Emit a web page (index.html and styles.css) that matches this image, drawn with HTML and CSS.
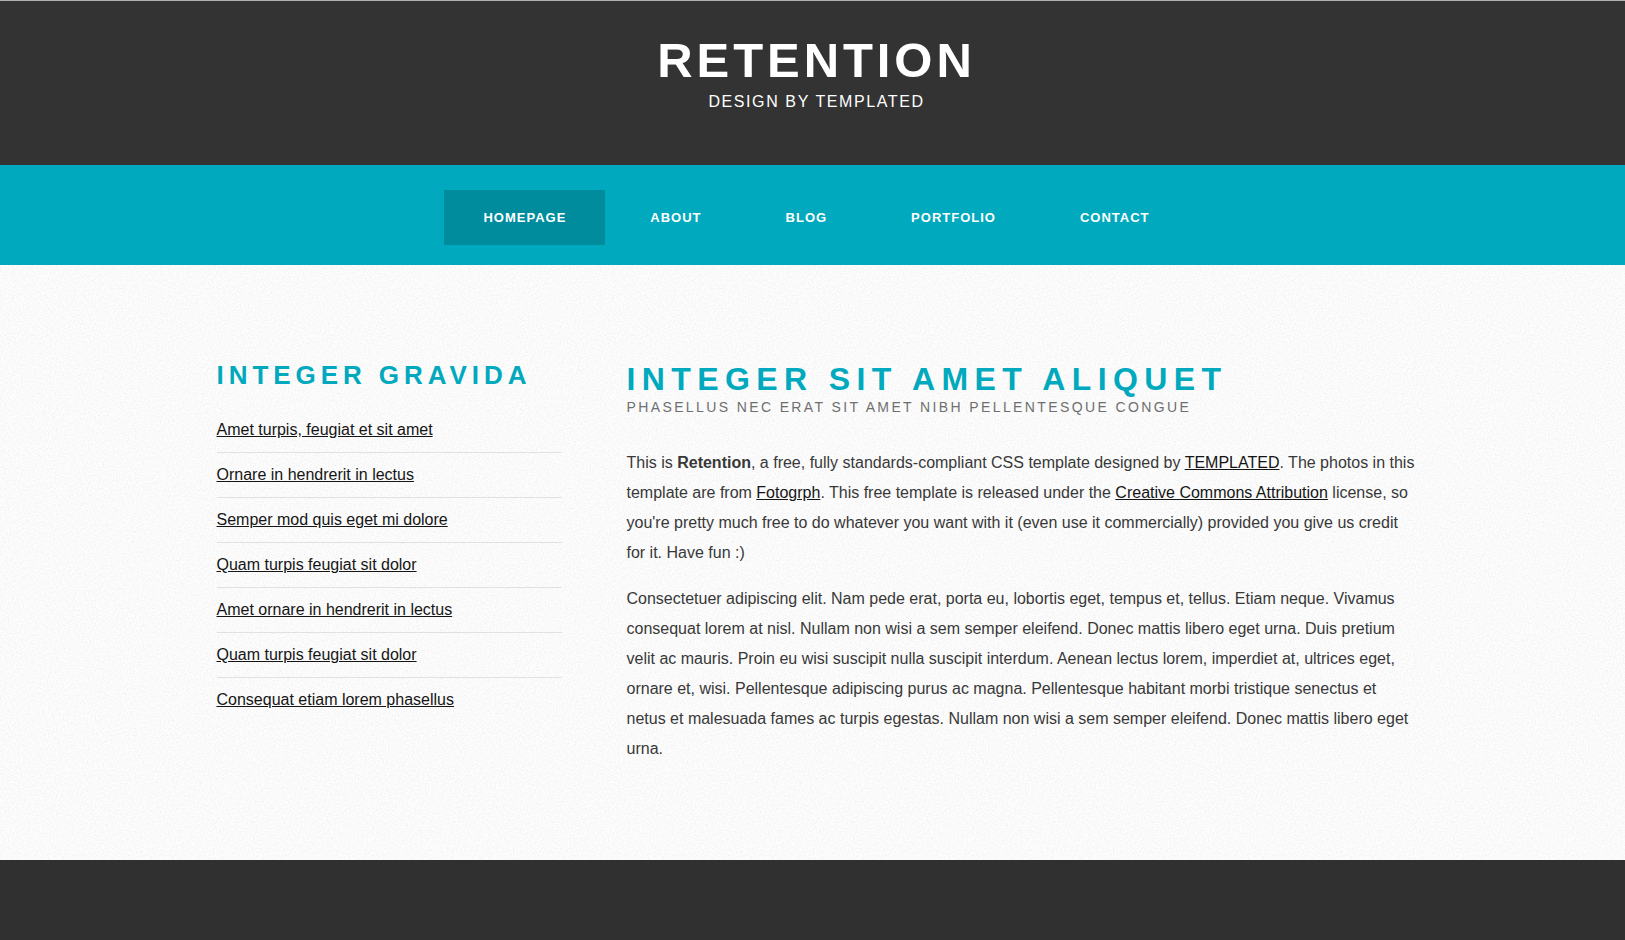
FILE: index.html
```html
<!DOCTYPE html>
<html lang="en">
<head>
<meta charset="utf-8">
<meta name="viewport" content="width=device-width, initial-scale=1">
<title>Retention by TEMPLATED</title>
<link rel="stylesheet" href="styles.css">
</head>
<body>
<header class="header">
  <h1 class="logo"><a href="#">Retention</a></h1>
  <p class="tagline">Design by <a href="#">TEMPLATED</a></p>
</header>
<nav class="menu" aria-label="Main">
  <ul class="menu-list">
    <li><a class="menu-link menu-link-active" href="#" aria-current="page">Homepage</a></li>
    <li><a class="menu-link" href="#">About</a></li>
    <li><a class="menu-link" href="#">Blog</a></li>
    <li><a class="menu-link" href="#">Portfolio</a></li>
    <li><a class="menu-link" href="#">Contact</a></li>
  </ul>
</nav>
<div class="page">
  <div class="container">
    <aside class="sidebar">
      <h2 class="sidebar-title">Integer gravida</h2>
      <ul class="link-list">
        <li><a href="#">Amet turpis, feugiat et sit amet</a></li>
        <li><a href="#">Ornare in hendrerit in lectus</a></li>
        <li><a href="#">Semper mod quis eget mi dolore</a></li>
        <li><a href="#">Quam turpis feugiat sit dolor</a></li>
        <li><a href="#">Amet ornare in hendrerit in lectus</a></li>
        <li><a href="#">Quam turpis feugiat sit dolor</a></li>
        <li><a href="#">Consequat etiam lorem phasellus</a></li>
      </ul>
    </aside>
    <main class="content">
      <h2 class="content-title">Integer sit amet aliquet</h2>
      <p class="byline">Phasellus nec erat sit amet nibh pellentesque congue</p>
      <p class="text">This is <strong>Retention</strong>, a free, fully standards-compliant CSS template designed by <a href="#">TEMPLATED</a>. The photos in this template are from <a href="#">Fotogrph</a>. This free template is released under the <a href="#">Creative Commons Attribution</a> license, so you're pretty much free to do whatever you want with it (even use it commercially) provided you give us credit for it. Have fun :)</p>
      <p class="text">Consectetuer adipiscing elit. Nam pede erat, porta eu, lobortis eget, tempus et, tellus. Etiam neque. Vivamus consequat lorem at nisl. Nullam non wisi a sem semper eleifend. Donec mattis libero eget urna. Duis pretium velit ac mauris. Proin eu wisi suscipit nulla suscipit interdum. Aenean lectus lorem, imperdiet at, ultrices eget, ornare et, wisi. Pellentesque adipiscing purus ac magna. Pellentesque habitant morbi tristique senectus et netus et malesuada fames ac turpis egestas. Nullam non wisi a sem semper eleifend. Donec mattis libero eget urna.</p>
    </main>
  </div>
</div>
<footer class="footer"></footer>
</body>
</html>
```

FILE: styles.css
```css
* {
  box-sizing: border-box;
}

body {
  display: flex;
  flex-direction: column;
  min-height: 100vh;
  margin: 0;
  background: #303030;
  color: #383838;
  font-family: "Liberation Sans", Arial, Helvetica, sans-serif;
  font-size: 16px;
  line-height: 30px;
}

h1,
h2,
p,
ul {
  margin: 0;
  padding: 0;
}

ul {
  list-style: none;
}

a {
  color: #151515;
}

/* Header */

.header {
  padding: 32px 0 48px 8px;
  border-top: 1px solid #b2b2b2;
  background: #333333;
  color: #ffffff;
  text-align: center;
  text-transform: uppercase;
}

.header a {
  color: #ffffff;
  text-decoration: none;
}

.logo {
  font-size: 49px;
  line-height: 54px;
  letter-spacing: 0.08em;
}

.tagline {
  line-height: 30px;
  letter-spacing: 0.1em;
}

/* Menu */

.menu {
  padding: 25px 0 20px 8px;
  background: #00a9bd;
}

.menu-list {
  display: flex;
  flex-wrap: wrap;
  justify-content: center;
  gap: 6px;
}

.menu-link {
  display: block;
  padding: 0 39px;
  color: #ffffff;
  font-size: 13px;
  font-weight: bold;
  line-height: 55px;
  letter-spacing: 1px;
  text-decoration: none;
  text-transform: uppercase;
}

.menu-link-active {
  background: #008c9d;
}

/* Page */

.page {
  padding: 95px 0 96px 8px;
  background: #fdfdfd url("data:image/svg+xml,%3Csvg xmlns='http://www.w3.org/2000/svg' width='300' height='300'%3E%3Cfilter id='n' x='0' y='0' width='100%25' height='100%25'%3E%3CfeTurbulence type='fractalNoise' baseFrequency='.6' numOctaves='3' stitchTiles='stitch'/%3E%3CfeColorMatrix values='0 0 0 0 0 0 0 0 0 0 0 0 0 0 0 .1 0 0 0 -.04'/%3E%3C/filter%3E%3Crect width='300' height='300' filter='url(%23n)'/%3E%3C/svg%3E");
}

.container {
  display: grid;
  grid-template-columns: 345fr 790fr;
  gap: 65px;
  max-width: 1200px;
  margin: 0 auto;
}

.sidebar-title,
.content-title {
  color: #00a9bd;
  text-transform: uppercase;
}

.sidebar-title {
  margin-bottom: 25px;
  font-size: 26px;
  line-height: 30px;
  letter-spacing: 0.19em;
}

.link-list li {
  padding: 7px 0;
  border-top: 1px solid #e1e1e1;
}

.link-list li:first-child {
  padding-top: 0;
  border-top: 0;
}

.content-title {
  font-size: 32px;
  line-height: 38px;
  letter-spacing: 0.2em;
}

.byline {
  margin-bottom: 32px;
  color: #6f6f6f;
  font-size: 14px;
  line-height: 18px;
  letter-spacing: 0.17em;
  text-transform: uppercase;
}

.text + .text {
  margin-top: 16px;
}

/* Footer */

.footer {
  flex: 1;
  min-height: 80px;
  background: #303030;
}

@media (max-width: 900px) {
  .page {
    padding: 48px 24px;
  }

  .container {
    grid-template-columns: 1fr;
  }
}
```
